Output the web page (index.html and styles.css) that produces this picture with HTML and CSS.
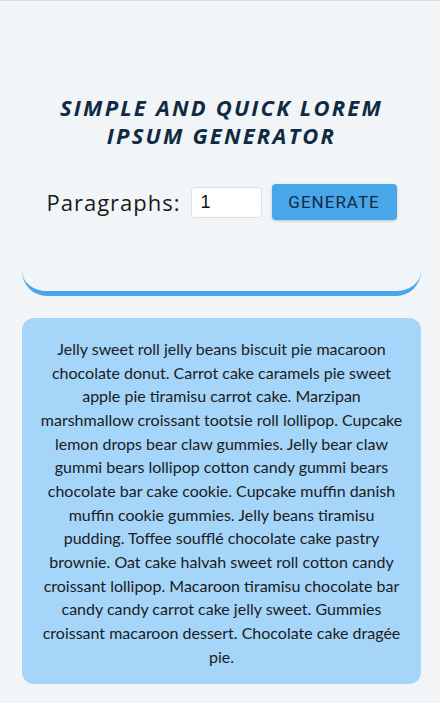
FILE: index.html
```html
<!DOCTYPE html>
<html lang="en">
<head>
<meta charset="utf-8">
<title>Lorem Ipsum Generator</title>
<link rel="stylesheet" href="styles.css">
</head>
<body>
<section class="hero">
  <h1 class="title">Simple and quick lorem ipsum generator</h1>
  <form class="lorem-form">
    <label class="label" for="amount">Paragraphs:</label>
    <input class="amount" type="number" id="amount" name="amount" value="1">
    <button class="btn" type="button">Generate</button>
  </form>
</section>
<article class="result">
  <p class="text">Jelly sweet roll jelly beans biscuit pie macaroon chocolate donut. Carrot cake caramels pie sweet apple pie tiramisu carrot cake. Marzipan marshmallow croissant tootsie roll lollipop. Cupcake lemon drops bear claw gummies. Jelly bear claw gummi bears lollipop cotton candy gummi bears chocolate bar cake cookie. Cupcake muffin danish muffin cookie gummies. Jelly beans tiramisu pudding. Toffee soufflé chocolate cake pastry brownie. Oat cake halvah sweet roll cotton candy croissant lollipop. Macaroon tiramisu chocolate bar candy candy carrot cake jelly sweet. Gummies croissant macaroon dessert. Chocolate cake dragée pie.</p>
</article>
</body>
</html>
```
FILE: styles.css
```css
* { box-sizing: border-box; }
html, body { margin: 0; padding: 0; }
body {
  background: #f1f5f8;
  border-top: 1px solid #dcdcdc;
  font-family: "Lato", "Open Sans", sans-serif;
  color: #222;
  min-height: 703px;
}
.hero {
  width: 399px;
  margin: 0 19px 0 22px;
  padding: 92px 0 71px;
  border-bottom: 5px solid #49a6e9;
  border-radius: 0 0 25px 25px;
  text-align: center;
}
.title {
  margin: 0 auto;
  max-width: 350px;
  font-family: "Open Sans", sans-serif;
  font-size: 22px;
  line-height: 28px;
  font-weight: 700;
  font-style: italic;
  letter-spacing: 2.2px;
  text-transform: uppercase;
  color: #102a42;
}
.lorem-form {
  margin-top: 35px;
  display: flex;
  justify-content: center;
  align-items: center;
  gap: 10px;
}
.label {
  font-family: "Open Sans", sans-serif;
  font-size: 22px;
  letter-spacing: 1px;
  color: #1a1a1a;
}
.amount {
  width: 71px;
  height: 31px;
  padding: 0 9px;
  border: 1px solid #dde1e5;
  border-radius: 4px;
  background: #fff;
  font-family: "Liberation Sans", Arial, sans-serif;
  font-size: 18px;
  color: #111;
  -moz-appearance: textfield;
  appearance: textfield;
}
.amount::-webkit-inner-spin-button,
.amount::-webkit-outer-spin-button { -webkit-appearance: none; margin: 0; }
.btn {
  width: 125px;
  height: 36px;
  border: none;
  border-radius: 4px;
  background: #49a6e9;
  color: #102a42;
  font-family: "Roboto", sans-serif;
  font-size: 17px;
  letter-spacing: 1px;
  text-transform: uppercase;
  box-shadow: 0 1px 3px rgba(0, 0, 0, 0.2);
  cursor: pointer;
}
.result {
  width: 399px;
  margin: 22px 19px 0 22px;
  padding: 19px 16px 16px;
  background: #a5d5f8;
  border-radius: 12px;
  text-align: center;
}
.text {
  margin: 0;
  font-size: 16px;
  line-height: 23.65px;
  color: #1c1c24;
}
```
